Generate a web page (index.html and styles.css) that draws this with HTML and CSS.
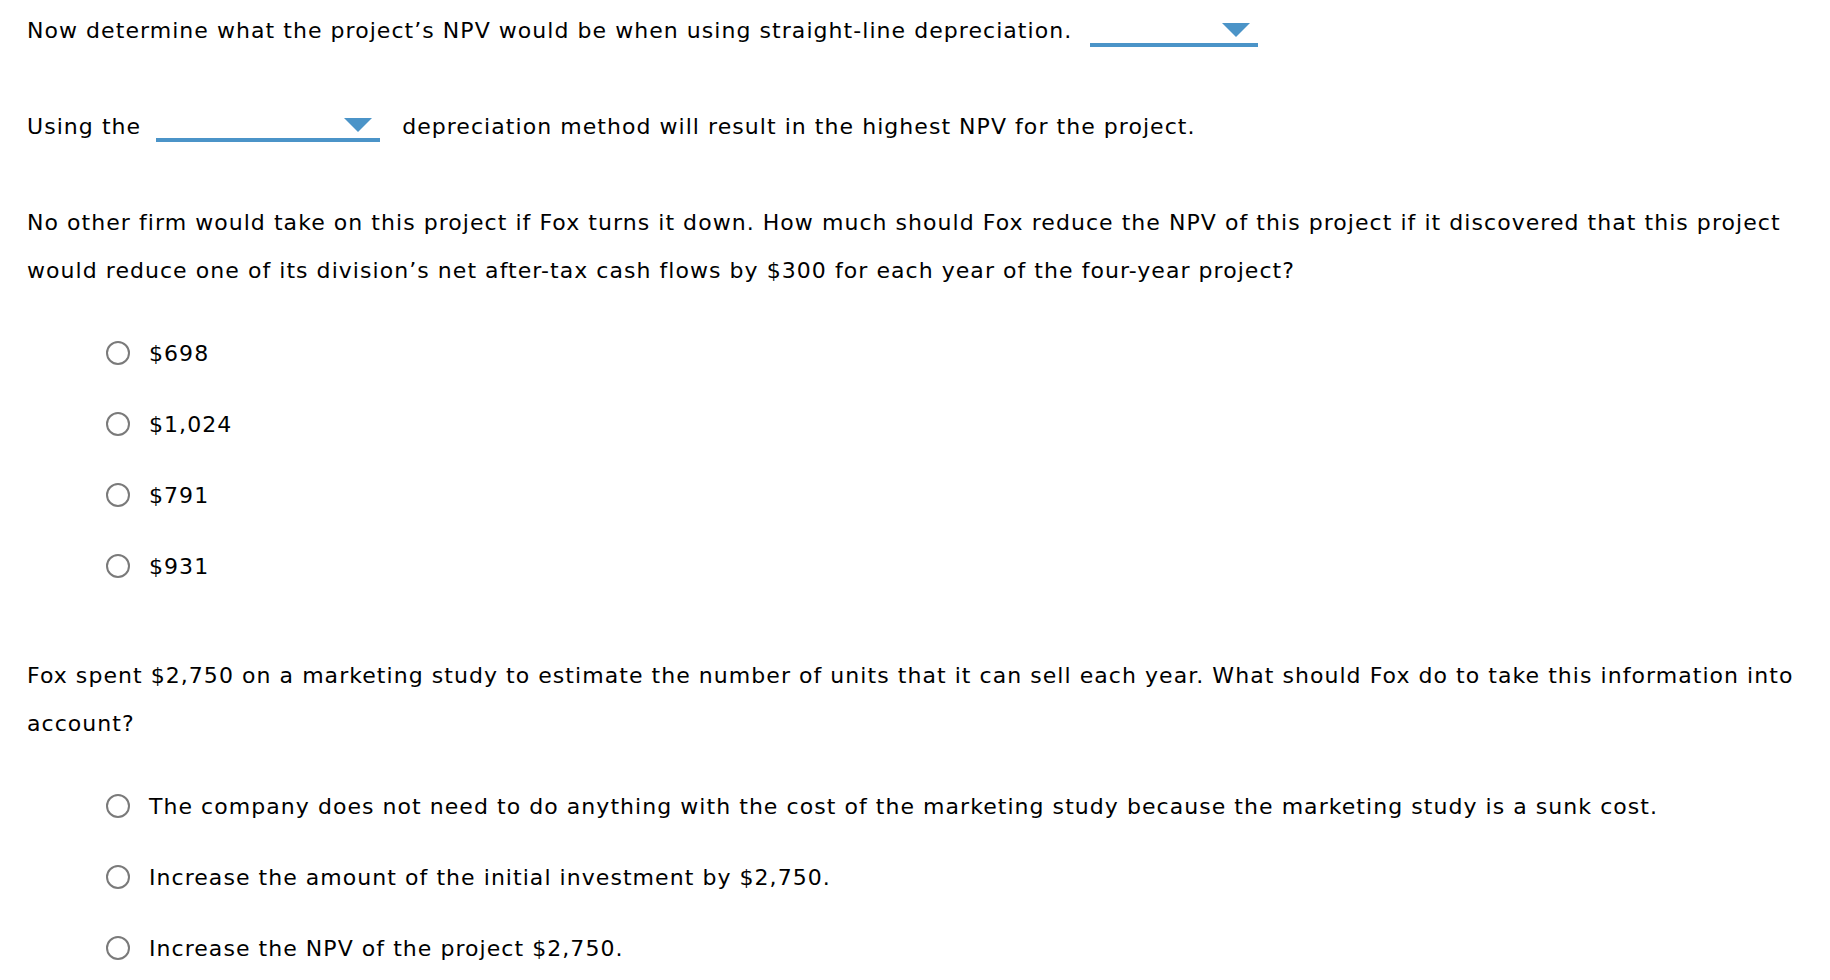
FILE: index.html
```html
<!DOCTYPE html>
<html lang="en">
<head>
<meta charset="utf-8">
<title>Question</title>
<link rel="stylesheet" href="styles.css">
</head>
<body>
<main class="page">
  <p class="stem stem-first">Now determine what the project’s NPV would be when using straight-line depreciation.<span class="select select-a"><svg class="caret" width="28" height="14" viewBox="0 0 28 14"><polygon points="0,0 28,0 14,14" fill="#4b94c8"/></svg></span></p>

  <p class="stem stem-second">Using the<span class="select select-b"><svg class="caret" width="28" height="14" viewBox="0 0 28 14"><polygon points="0,0 28,0 14,14" fill="#4b94c8"/></svg></span>depreciation method will result in the highest NPV for the project.</p>

  <p class="stem stem-third">No other firm would take on this project if Fox turns it down. How much should Fox reduce the NPV of this project if it discovered that this project would reduce one of its division’s net after-tax cash flows by $300 for each year of the four-year project?</p>

  <ul class="options">
    <li class="option"><span class="radio"></span><span class="label">$698</span></li>
    <li class="option"><span class="radio"></span><span class="label">$1,024</span></li>
    <li class="option"><span class="radio"></span><span class="label">$791</span></li>
    <li class="option"><span class="radio"></span><span class="label">$931</span></li>
  </ul>

  <p class="stem stem-fourth">Fox spent $2,750 on a marketing study to estimate the number of units that it can sell each year. What should Fox do to take this information into account?</p>

  <ul class="options">
    <li class="option"><span class="radio"></span><span class="label">The company does not need to do anything with the cost of the marketing study because the marketing study is a sunk cost.</span></li>
    <li class="option"><span class="radio"></span><span class="label">Increase the amount of the initial investment by $2,750.</span></li>
    <li class="option"><span class="radio"></span><span class="label">Increase the NPV of the project $2,750.</span></li>
  </ul>
</main>
</body>
</html>
```

FILE: styles.css
```css
html, body {
  margin: 0;
  padding: 0;
  background: #ffffff;
}

.page {
  padding: 7px 22px 0 27px;
  font-family: "DejaVu Sans", Verdana, sans-serif;
  font-size: 22px;
  line-height: 48px;
  letter-spacing: 1.05px;
  color: #000000;
}

.stem {
  margin: 0;
}

.stem-second {
  margin-top: 48px;
}

.stem-third {
  margin-top: 48px;
}

.stem-fourth {
  margin-top: 61px;
}

.select {
  display: inline-block;
  box-sizing: border-box;
  height: 25px;
  border-bottom: 4px solid #4b94c8;
  padding: 1px 8px 0 0;
}

.select-a {
  width: 168px;
  margin-left: 18px;
  vertical-align: -9px;
}

.select-b {
  width: 224px;
  margin: 0 22px 0 15px;
  vertical-align: -8px;
}

.caret {
  display: block;
  margin-left: auto;
}

.options {
  list-style: none;
  margin: 35px 0 0 0;
  padding: 0 0 0 79px;
  display: flex;
  flex-direction: column;
  gap: 23px;
}

.option {
  display: flex;
  align-items: center;
}

.radio {
  box-sizing: border-box;
  width: 24px;
  height: 24px;
  border: 2px solid #7a7a7a;
  border-radius: 50%;
  margin-right: 19px;
  margin-top: -3px;
  flex: none;
}
```
